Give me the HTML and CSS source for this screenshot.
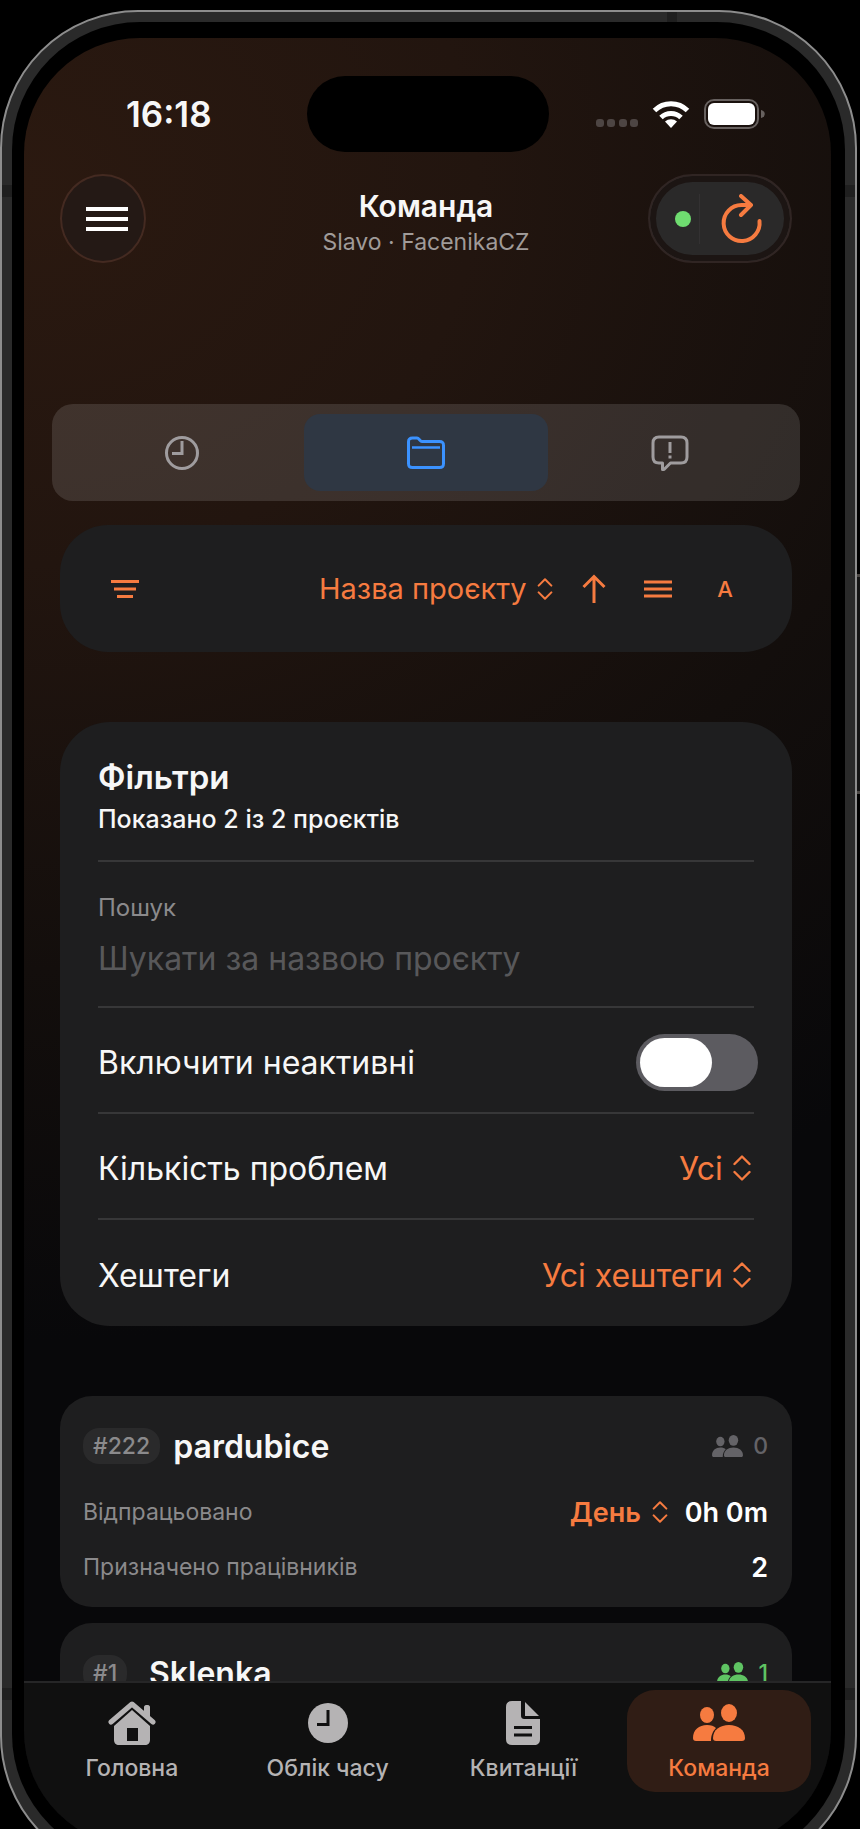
FILE: index.html
```html
<!DOCTYPE html>
<html lang="uk">
<head>
  <meta charset="UTF-8">
  <meta name="viewport" content="width=device-width, initial-scale=1.0">
  <title>Команда</title>
  <link rel="stylesheet" href="styles.css">
</head>
<body>
  <svg class="symbols" aria-hidden="true">
    <symbol id="icon-updown" viewBox="0 0 18 26">
      <path d="M1.500 9 9 1.500 16.500 9M1.500 17 9 24.500 16.500 17" fill="none" stroke="currentColor" stroke-width="2.400" stroke-linecap="round" stroke-linejoin="round"/>
    </symbol>
    <symbol id="icon-users" viewBox="0 0 52 37">
      <ellipse cx="14" cy="11" rx="7" ry="8"/>
      <ellipse cx="36" cy="9" rx="8" ry="9"/>
      <path d="M0 34c0-8 6-13 14-13 4 0 7 1 9 3-3 3-5 7-5 13H3c-2 0-3-1-3-3z"/>
      <path d="M20 34c0-8 7-13 16-13s16 5 16 13c0 2-1 3-3 3H23c-2 0-3-1-3-3z"/>
    </symbol>
  </svg>

  <div class="phone">
    <span class="antenna antenna-top"></span>
    <span class="antenna antenna-left"></span>
    <span class="antenna antenna-right"></span>
    <span class="antenna antenna-left antenna-low"></span>
    <span class="antenna antenna-right antenna-low"></span>
    <span class="side-button"></span>

    <div class="bezel">
      <div class="screen">
        <div class="status-bar">
          <span class="time">16:18</span>
          <span class="island"></span>
          <div class="status-icons">
            <svg width="42" height="30" viewBox="0 0 42 30" fill="#4d4543">
              <rect x="0" y="20" width="8" height="8" rx="3"/>
              <rect x="11" y="20" width="8" height="8" rx="3"/>
              <rect x="23" y="20" width="8" height="8" rx="3"/>
              <rect x="34" y="20" width="8" height="8" rx="3"/>
            </svg>
            <svg width="38" height="30" viewBox="0 0 38 30" fill="none" stroke="#fff" stroke-width="5">
              <path d="M2.500 11.500a23.500 23.500 0 0 1 33 0"/>
              <path d="M9 18.500a14.500 14.500 0 0 1 20 0"/>
              <path d="M19 29l-6-6.500a9 9 0 0 1 12 0z" fill="#fff" stroke="none"/>
            </svg>
            <svg width="61" height="30" viewBox="0 0 61 30">
              <rect x="1" y="1" width="53" height="28" rx="9" fill="none" stroke="#67615f" stroke-width="2"/>
              <rect x="4" y="4" width="47" height="22" rx="6" fill="#fff"/>
              <path d="M57 11c5 1 5 7 0 8z" fill="#67615f"/>
            </svg>
          </div>
        </div>

        <header class="header">
          <button type="button" class="menu-btn" aria-label="Меню">
            <svg width="42" height="26" viewBox="0 0 42 26" stroke="#fff" stroke-width="4">
              <path d="M0 3h42M0 13h42M0 23h42"/>
            </svg>
          </button>
          <div class="header-title">
            <h1>Команда</h1>
            <p>Slavo · FacenikaCZ</p>
          </div>
          <div class="status-pill">
            <span class="online-dot"></span>
            <button type="button" class="refresh-btn" aria-label="Оновити">
              <svg width="42" height="50" viewBox="0 0 42 50" fill="none" stroke="currentColor" stroke-width="4" stroke-linecap="round" stroke-linejoin="round">
                <path d="M38.500 27A18 18 0 1 1 20.500 11h9"/>
                <path d="M20 2l10 9-10 10"/>
              </svg>
            </button>
          </div>
        </header>

        <main class="content">
          <div class="segments">
            <button type="button" class="segment" aria-label="Час">
              <svg width="36" height="36" viewBox="0 0 36 36" fill="none" stroke="currentColor" stroke-width="3">
                <circle cx="18" cy="18" r="15.500"/>
                <path d="M18 6v12.500H8"/>
              </svg>
            </button>
            <button type="button" class="segment active" aria-label="Проєкти">
              <svg width="40" height="36" viewBox="0 0 40 36" fill="none" stroke="currentColor" stroke-width="3" stroke-linejoin="round">
                <path d="M2.500 7c0-3 1-4 4-4H11c2 0 3 3.500 5 3.500h17.500c3 0 4 1 4 4v18c0 3-1 4-4 4h-27c-3 0-4-1-4-4z"/>
                <path d="M6 12.500h28" stroke-width="2.500"/>
              </svg>
            </button>
            <button type="button" class="segment" aria-label="Проблеми">
              <svg width="38" height="38" viewBox="0 0 38 38" fill="none" stroke="currentColor" stroke-width="3" stroke-linejoin="round">
                <path d="M8 3h22c4 0 6 2 6 6v14c0 4-2 6-6 6H19.500L13 35.500h-1.500V29H8c-4 0-6-2-6-6V9c0-4 2-6 6-6z"/>
                <path d="M19 8v11M19 21.500v3"/>
              </svg>
            </button>
          </div>

          <div class="toolbar">
            <button type="button" class="tool" aria-label="Фільтр">
              <svg width="30" height="20" viewBox="0 0 30 20" stroke="currentColor" stroke-width="3">
                <path d="M1 2.500h28M4 10h22M7 17.500h16"/>
              </svg>
            </button>
            <div class="picker sort-picker">
              <select aria-label="Сортування">
                <option>Назва проєкту</option>
              </select>
              <svg class="updown-small"><use href="#icon-updown"/></svg>
            </div>
            <button type="button" class="tool" aria-label="За зростанням">
              <svg width="24" height="30" viewBox="0 0 24 30" fill="none" stroke="currentColor" stroke-width="3">
                <path d="M12 29V2M1.500 13 12 2.500 22.500 13"/>
              </svg>
            </button>
            <button type="button" class="tool" aria-label="Список">
              <svg width="30" height="20" viewBox="0 0 30 20" stroke="currentColor" stroke-width="3">
                <path d="M1 3h28M1 10h28M1 17h28"/>
              </svg>
            </button>
            <button type="button" class="tool letter">A</button>
          </div>

          <section class="filters">
            <div class="filters-head">
              <h2>Фільтри</h2>
              <p>Показано 2 із 2 проєктів</p>
            </div>
            <div class="search">
              <label for="search">Пошук</label>
              <input type="text" id="search" placeholder="Шукати за назвою проєкту">
            </div>
            <div class="filter-row">
              <label for="inactive">Включити неактивні</label>
              <input type="checkbox" id="inactive" class="switch">
            </div>
            <div class="filter-row">
              <label for="problems">Кількість проблем</label>
              <div class="picker">
                <select id="problems">
                  <option>Усі</option>
                </select>
                <svg class="updown"><use href="#icon-updown"/></svg>
              </div>
            </div>
            <div class="filter-row">
              <label for="hashtags">Хештеги</label>
              <div class="picker">
                <select id="hashtags">
                  <option>Усі хештеги</option>
                </select>
                <svg class="updown"><use href="#icon-updown"/></svg>
              </div>
            </div>
          </section>

          <article class="project">
            <div class="project-head">
              <span class="badge-slot"><span class="badge">#222</span></span>
              <h3>pardubice</h3>
              <span class="members"><svg><use href="#icon-users"/></svg>0</span>
            </div>
            <div class="project-row">
              <label for="period">Відпрацьовано</label>
              <div class="picker period">
                <select id="period">
                  <option>День</option>
                </select>
                <svg class="updown-small"><use href="#icon-updown"/></svg>
              </div>
              <strong>0h 0m</strong>
            </div>
            <div class="project-row">
              <span>Призначено працівників</span>
              <strong>2</strong>
            </div>
          </article>

          <article class="project">
            <div class="project-head">
              <span class="badge-slot"><span class="badge">#1</span></span>
              <h3>Sklenka</h3>
              <span class="members working"><svg><use href="#icon-users"/></svg>1</span>
            </div>
          </article>
        </main>

        <nav class="tabs">
          <a href="#home" class="tab">
            <svg width="48" height="44" viewBox="0 0 48 44">
              <path d="M3 21 24 3l21 18" fill="none" stroke="currentColor" stroke-width="5" stroke-linecap="round" stroke-linejoin="round"/>
              <path d="M36 6c0-1 1-2 2-2h2c1 0 2 1 2 2v12l-6-5z"/>
              <path d="M24 9 42 25v14c0 3-2 5-5 5h-7V27H19v17h-8c-3 0-5-2-5-5V25z"/>
              <path d="M18 40h13v4H18z"/>
            </svg>
            Головна
          </a>
          <a href="#time" class="tab">
            <svg width="40" height="44" viewBox="0 0 40 44">
              <circle cx="20" cy="22" r="20"/>
              <path d="M20 9v14.500H9" fill="none" stroke="#101010" stroke-width="3"/>
            </svg>
            Облік часу
          </a>
          <a href="#receipts" class="tab">
            <svg width="34" height="44" viewBox="0 0 34 44">
              <path d="M6 0h9v14c0 3 1 4 4 4h15v20c0 4-2 6-6 6H6c-4 0-6-2-6-6V6c0-4 2-6 6-6z"/>
              <path d="M19 1l14 14H20c-1 0-1 0-1-1z"/>
              <path d="M8 26.500h18M8 34h18" stroke="#101010" stroke-width="3"/>
            </svg>
            Квитанції
          </a>
          <a href="#team" class="tab active">
            <svg width="52" height="44" viewBox="0 0 52 44"><use href="#icon-users" y="3" width="52" height="37"/></svg>
            Команда
          </a>
        </nav>
      </div>
    </div>
  </div>
</body>
</html>
```
FILE: styles.css
```css
:root {
  --accent: #f67b40;
  --panel: #1e1e1f;
  --line: #373738;
  --text: #f7f7f7;
  --muted: #8b8a8c;
}

* {
  margin: 0;
  padding: 0;
  box-sizing: border-box;
}

body {
  height: 100vh;
  overflow: hidden;
  background: #000;
  color: var(--text);
  font-family: Inter, "Liberation Sans", sans-serif;
}

button,
input,
select {
  border: none;
  background: none;
  color: inherit;
  font: inherit;
}

button,
select {
  cursor: pointer;
}

svg {
  display: block;
  flex: none;
}

.symbols {
  position: absolute;
  width: 0;
  height: 0;
}

/* Phone body, runs past the bottom of the window */
.phone {
  position: relative;
  height: calc(100vh + 35px);
  margin: 10px 3px 0 0;
  padding: 10px;
  border: 2px solid #8d8d8d;
  border-radius: 138px;
  background: #2a2a2a;
}

.bezel {
  height: 100%;
  padding: 16px 14px 15px 12px;
  border-radius: 128px;
  background: #000;
}

.antenna {
  position: absolute;
  width: 10px;
  height: 12px;
  background: #1f1f1f;
}

.antenna-top { top: 0; right: 178px; height: 10px; }
.antenna-left { top: 173px; left: 0; }
.antenna-right { top: 173px; right: 0; }
.antenna-low { top: auto; bottom: 172px; }

.side-button {
  position: absolute;
  top: 562px;
  right: -5px;
  width: 3px;
  height: 220px;
  border-top: 3px solid #4a4643;
  border-bottom: 3px solid #4a4643;
  background: #151515;
}

.screen {
  display: flex;
  flex-direction: column;
  height: 100%;
  overflow: hidden;
  border-radius: 116px;
  background: radial-gradient(170% 64% at 0 8%, #2b1910 0%, #22150f 33%, #130e0c 68%, #08080a 100%);
}

/* Status bar */
.status-bar {
  display: grid;
  grid-template-columns: 1fr 242px 1fr;
  align-items: center;
  height: 114px;
  padding-top: 38px;
}

.time {
  padding-left: 102px;
  font-size: 35px;
  font-weight: 600;
}

.island {
  height: 76px;
  border-radius: 38px;
  background: #000;
}

.status-icons {
  display: flex;
  justify-content: flex-end;
  gap: 14px;
  padding-right: 66px;
}

/* Header */
.header {
  display: grid;
  grid-template-columns: 1fr auto 1fr;
  align-items: center;
  padding: 22px 39px 0 36px;
}

.menu-btn {
  display: flex;
  align-items: center;
  justify-content: center;
  width: 86px;
  height: 89px;
  padding-left: 8px;
  border: 2px solid #442a21;
  border-radius: 50%;
  background: #241915;
}

.header-title {
  padding-top: 8px;
  text-align: center;
}

.header-title h1 {
  font-size: 30px;
  font-weight: 600;
  line-height: 38px;
}

.header-title p {
  color: #a09b99;
  font-size: 23px;
  line-height: 34px;
}

.status-pill {
  display: flex;
  align-items: center;
  justify-self: end;
  width: 144px;
  height: 89px;
  padding-left: 25px;
  border: 2px solid #302523;
  border-radius: 45px;
  background: #2a2929;
  box-shadow: inset 0 0 0 6px #1c1513;
}

.online-dot {
  width: 16px;
  height: 16px;
  border-radius: 50%;
  background: #6fdc70;
}

.refresh-btn {
  margin-left: 8px;
  padding-left: 21px;
  border-left: 1px solid #333132;
  color: var(--accent);
}

/* Content */
.content {
  flex: 1;
  min-height: 0;
  padding: 141px 39px 0 36px;
  overflow-y: auto;
  scrollbar-width: none;
}

.segments {
  display: grid;
  grid-template-columns: repeat(3, 1fr);
  height: 97px;
  margin: 0 -8px 24px;
  padding: 10px 8px;
  border-radius: 21px;
  background: rgba(255, 255, 255, 0.12);
}

.segment {
  display: flex;
  align-items: center;
  justify-content: center;
  border-radius: 16px;
  color: #9f9c9e;
}

.segment.active {
  background: #2f3743;
  color: #3b92ff;
}

.toolbar {
  display: flex;
  align-items: center;
  height: 127px;
  margin-bottom: 70px;
  padding: 0 52px 0 50px;
  border-radius: 48px;
  background: var(--panel);
  color: var(--accent);
}

.sort-picker {
  margin-left: auto;
}

.tool + .tool {
  margin-left: 37px;
}

.picker + .tool {
  margin-left: 29px;
}

.toolbar .letter {
  width: 30px;
  font-size: 22px;
  font-weight: 500;
}

.picker {
  display: flex;
  align-items: center;
  gap: 10px;
  color: var(--accent);
  font-size: 32px;
}

.picker select {
  appearance: none;
  outline: none;
}

.sort-picker {
  font-size: 29px;
}

.updown {
  width: 18px;
  height: 26px;
  margin-right: 3px;
}

.updown-small {
  width: 16px;
  height: 22px;
}

/* Filters */
.filters {
  margin-bottom: 70px;
  padding: 36px 38px 0;
  border-radius: 50px;
  background: var(--panel);
}

.filters-head {
  padding-bottom: 25px;
  border-bottom: 2px solid var(--line);
}

.filters-head h2 {
  margin-bottom: 7px;
  font-size: 33px;
  font-weight: 600;
  line-height: 38px;
}

.filters-head p {
  font-size: 25px;
  font-weight: 500;
  line-height: 32px;
}

.search {
  padding: 30px 0 28px;
  border-bottom: 2px solid var(--line);
}

.search label {
  display: block;
  margin-bottom: 14px;
  color: var(--muted);
  font-size: 24px;
  line-height: 32px;
}

.search input {
  display: block;
  width: 100%;
  height: 40px;
  outline: none;
  font-size: 32px;
}

.search input::placeholder {
  color: #58585a;
}

.filter-row {
  display: flex;
  align-items: center;
  justify-content: space-between;
  height: 106px;
  padding-top: 4px;
  border-bottom: 2px solid var(--line);
  font-size: 32px;
}

.filter-row:last-child {
  border-bottom: none;
}

.switch {
  width: 122px;
  height: 57px;
  margin-right: -4px;
  padding: 4px;
  appearance: none;
  border-radius: 29px;
  background: #5c5b60;
  cursor: pointer;
}

.switch::before {
  content: "";
  display: block;
  width: 72px;
  height: 49px;
  border-radius: 25px;
  background: #fff;
}

.switch:checked {
  background: var(--accent);
}

.switch:checked::before {
  margin-left: auto;
}

/* Project cards */
.project {
  margin-bottom: 16px;
  padding: 31px 24px 22px 23px;
  border-radius: 32px;
  background: var(--panel);
}

.project-head {
  display: flex;
  align-items: center;
  height: 38px;
}

.badge-slot {
  min-width: 53px;
}

.badge {
  display: inline-block;
  padding: 0 10px;
  border-radius: 16px;
  background: #2a2a2b;
  color: var(--muted);
  font-size: 23px;
  font-weight: 500;
  line-height: 36px;
}

.project-head h3 {
  margin-left: 13px;
  font-size: 32px;
  font-weight: 600;
}

.members {
  display: flex;
  align-items: center;
  gap: 10px;
  margin-left: auto;
  color: #646367;
  font-size: 23px;
  font-weight: 500;
}

.members svg {
  width: 31px;
  height: 22px;
  fill: currentColor;
}

.members.working {
  color: #5fc463;
}

.project-row {
  display: flex;
  align-items: center;
  justify-content: space-between;
  height: 36px;
  margin-top: 29px;
  color: var(--muted);
  font-size: 23px;
}

.project-row + .project-row {
  margin-top: 19px;
}

.project-row strong {
  color: #fff;
  font-size: 27px;
  font-weight: 600;
}

.period {
  margin-left: auto;
  margin-right: 17px;
  font-size: 27px;
  font-weight: 600;
}

/* Tab bar */
.tabs {
  display: grid;
  grid-template-columns: repeat(4, 1fr);
  gap: 12px;
  align-items: start;
  height: 166px;
  padding: 7px 20px 0 16px;
  border-top: 2px solid #262627;
  background: #101010;
}

.tab {
  display: flex;
  flex-direction: column;
  align-items: center;
  gap: 7px;
  height: 102px;
  padding-top: 11px;
  border-radius: 28px;
  color: #b5b3b4;
  font-size: 23px;
  font-weight: 500;
  line-height: 32px;
  text-decoration: none;
}

.tab svg {
  fill: currentColor;
}

.tab.active {
  background: #301d15;
  color: var(--accent);
}
```
